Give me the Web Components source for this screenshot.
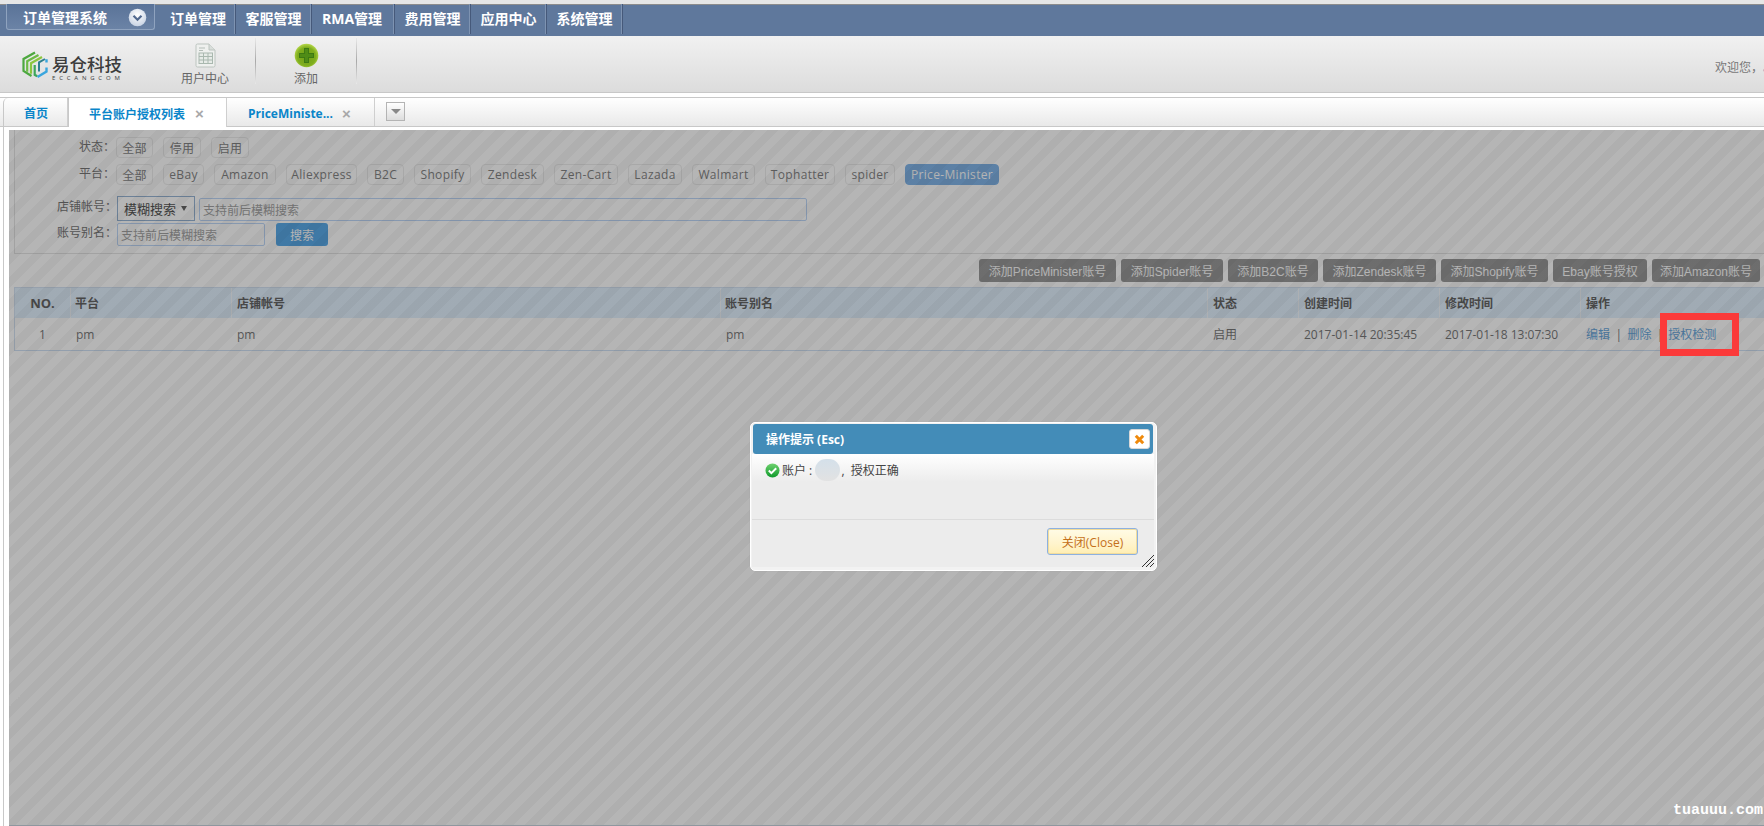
<!DOCTYPE html>
<html lang="zh"><head><meta charset="utf-8"><title>订单管理系统</title>
<style>
html,body{margin:0;padding:0;height:826px;overflow:hidden;background:#fff;}
body{font:12px "Open Sans","Noto Sans CJK SC",sans-serif;color:#777;}
x-app{display:flex;flex-direction:column;width:1764px;height:826px;overflow:hidden;}
</style></head><body>
<x-app>
  <x-topbar></x-topbar>
  <x-toolbar></x-toolbar>
  <x-tabs></x-tabs>
  <x-workspace>
    <x-search></x-search>
    <x-actions></x-actions>
    <x-grid></x-grid>
    <x-overlay slot="over"></x-overlay>
    <x-callout slot="over"></x-callout>
    <x-dialog slot="over"></x-dialog>
    <x-watermark slot="over">tuauuu.com</x-watermark>
  </x-workspace>
</x-app>
<script>
const def=(name,html)=>customElements.define(name,class extends HTMLElement{
  constructor(){super();this.attachShadow({mode:'open'}).innerHTML=html;}
});

def('x-pill',`<style>
:host{display:inline-flex;align-items:center;justify-content:center;box-sizing:border-box;height:21px;width:var(--w);
border:1px solid #ececec;border-radius:4px;color:#858585;font-size:12px;letter-spacing:.35px;white-space:nowrap;}
:host([on]){background:#81b5e9;border-color:#81b5e9;color:#fff;}
</style><slot></slot>`);

def('x-topbar',`<style>
:host{display:block;flex:none;height:36px;box-sizing:border-box;border-top:4px solid #e6e6e6;background:#5f789c;box-shadow:inset 0 1px 0 #8c8c8c;}
.wrap{display:flex;height:32px;padding-left:6px;}
.sys{box-sizing:border-box;width:149px;height:26px;margin-right:5px;display:flex;align-items:center;justify-content:space-between;padding:0 7px 0 16px;
background:linear-gradient(#5a7398,#6b83a6);border:1px solid #8fa3bf;border-top:0;border-radius:0 0 3px 3px;color:#fff;font-weight:700;font-size:14px;}
svg{display:block;margin-top:2px}
nav{display:flex;}
a{box-sizing:border-box;width:76px;height:30px;padding:0 0 2px 2px;display:flex;align-items:center;justify-content:center;color:#fff;font-weight:700;font-size:14px;border-right:1px solid #7e93b1;white-space:nowrap;box-shadow:1px 0 0 #46597a;}
a.r{width:83px;padding-left:0}
</style><div class="wrap"><div class="sys"><span>订单管理系统</span>
<svg width="19" height="19" viewBox="0 0 19 19"><defs><radialGradient id="g" cx=".5" cy=".35" r=".7"><stop offset="0" stop-color="#fff"/><stop offset="1" stop-color="#c4d0e2"/></radialGradient></defs><circle cx="9.5" cy="9.5" r="8.8" fill="url(#g)"/><path d="M5.5 7.8l4 4 4-4" fill="none" stroke="#51698f" stroke-width="2.2"/></svg></div>
<nav><a style="width:75px">订单管理</a><a>客服管理</a><a class="r">RMA管理</a><a>费用管理</a><a>应用中心</a><a>系统管理</a></nav></div>`);

def('x-toolbar',`<style>
:host{display:flex;flex:none;height:57px;box-sizing:border-box;background:linear-gradient(#f1f1f1,#dcdcdc);border-bottom:1px solid #c8c8c8;position:relative;overflow:hidden;}
.logo{width:155px;flex:none;display:flex;padding:15px 0 0 22px;box-sizing:border-box;gap:4px;}
.lt{display:flex;flex-direction:column;color:#3c3c3c;line-height:1;margin-top:3px}
.lt b{font:500 17.5px "Noto Sans CJK SC",sans-serif;line-height:20px;letter-spacing:0;white-space:nowrap;}
.lt i{font:normal 6px "Open Sans",sans-serif;letter-spacing:3.8px;white-space:nowrap;line-height:7px;margin-top:1px}
.it{box-sizing:border-box;width:100px;height:49px;margin-top:2px;display:flex;flex-direction:column;align-items:center;justify-content:flex-end;color:#666;font-size:12px;line-height:16px;flex:none}
.sep{width:1px;height:46px;margin-top:2px;background:linear-gradient(#e8e8e8,#a8a8a8 50%,#e8e8e8);flex:none}
.it svg{display:block;margin-bottom:3px}
.welcome{position:absolute;left:1715px;top:23px;white-space:nowrap;color:#777;font-size:12px;line-height:18px}
.welcome span{color:#6a78b8}
</style>
<div class="logo"><svg width="26" height="28" viewBox="0 0 26 28" fill="none">
<path d="M13 1.5L1.5 8v12l8 5" stroke="#4da83f" stroke-width="2.2"/>
<path d="M16.5 4L5.2 10.2v10.6" stroke="#6cbb45" stroke-width="2.2"/>
<path d="M20 6L9 12.2v10.5" stroke="#8cc63f" stroke-width="2.2"/>
<path d="M12.7 14v9.8l2.5 1.5" stroke="#3ea65a" stroke-width="2.2"/>
<path d="M24.5 8.3v3.2M24.5 16.5v4L15.5 26" stroke="#3aa6de" stroke-width="2.4"/>
<path d="M23 8l-6 3.4v9" stroke="#2f7f8f" stroke-width="2"/></svg>
<div class="lt"><b>易仓科技</b><i>ECCANGCOM</i></div></div>
<div class="it"><svg width="21" height="25" viewBox="0 0 21 25"><path d="M1 2.5Q1 1 2.5 1H14l6 6v15.5q0 1.500-1.500 1.500h-16Q1 24 1 22.500z" fill="#eef0ee" stroke="#bcc4bf"/><path d="M14 1v6h6" fill="#d9dedb" stroke="#bcc4bf"/><path d="M4 5h6M4 7.500h4" stroke="#b4bdb8"/><rect x="4" y="10" width="13.500" height="10.500" fill="#e6ebe7" stroke="#a9b8af"/><path d="M4 13.500h13.500M4 17h13.500M8.500 10v10.500M13 10v10.500" stroke="#a9b8af"/></svg>用户中心</div>
<div class="sep"></div>
<div class="it"><svg width="25" height="25" viewBox="0 0 25 25"><defs><radialGradient id="p" cx=".5" cy=".55" r=".55"><stop offset="0" stop-color="#6f9e16"/><stop offset=".7" stop-color="#7fae1e"/><stop offset="1" stop-color="#b7d84a"/></radialGradient></defs><circle cx="12.500" cy="12.500" r="11.800" fill="url(#p)"/><path d="M10 5h5v5h5v5h-5v5h-5v-5H5v-5h5z" fill="#3e7a12"/><path d="M11 6h3v5h5v3h-5v5h-3v-5H6v-3h5z" fill="#4f8c16"/></svg>添加</div>
<div class="sep"></div>
<div class="welcome">欢迎您，<span>admin</span></div>`);

def('x-tabs',`<style>
:host{display:flex;align-items:stretch;flex:none;box-sizing:border-box;height:30px;margin-top:4px;padding-left:3px;border-top:1px solid #c8c8c8;border-bottom:1px solid #c8c8c8;background:linear-gradient(#fff,#e9e9e9);}
.t{box-sizing:border-box;display:flex;align-items:center;padding-top:2px;color:#0a85c9;font-weight:700;font-size:12px;border-right:1px solid #cfcfcf;white-space:nowrap;position:relative;}
.first{width:65px;padding-left:20px;border-left:1px solid #c8c8c8;border-top-left-radius:5px;}
.act{width:159px;padding-left:20px;background:#fff;height:30px;margin-bottom:-1px;border-left:1px solid #c8c8c8;}
.third{width:148px;padding-left:21px;}
.x{position:absolute;top:9px;color:#a8a8a8;font:700 15px "Liberation Sans",sans-serif;line-height:13px}
.dd{box-sizing:border-box;width:19px;height:19px;margin:4px 0 0 11px;border:1px solid #b4b4b4;background:linear-gradient(#fff,#ddd);display:flex;align-items:center;justify-content:center;}
.dd i{width:0;height:0;border:5px solid transparent;border-top:5px solid #888;border-bottom:0;}
</style>
<div class="t first">首页</div>
<div class="t act">平台账户授权列表<span class="x" style="left:126px">×</span></div>
<div class="t third">PriceMiniste...<span class="x" style="left:115px">×</span></div>
<div class="dd"><i></i></div>`);

customElements.define('x-workspace',class extends HTMLElement{
  constructor(){super();this.attachShadow({mode:'open'}).innerHTML=`<style>
  :host{display:block;flex:1;min-height:0;position:relative;box-sizing:border-box;padding:3px 0 0 14px;background:#fff;overflow:hidden;}
  :host::before{content:"";position:absolute;left:3px;top:0;bottom:0;width:1px;background:#c8c8c8}
  .main{display:flex;flex-direction:column}
  </style><div class="main"><slot></slot></div><slot name="over"></slot>`;}
});

def('x-search',`<style>
:host{display:flex;flex-direction:column;box-sizing:border-box;height:124px;padding-top:7px;border-left:1px solid #e4e4e4;border-bottom:1px solid #e4e4e4;}
.r{display:flex;align-items:center;}
.l{width:101px;flex:none;text-align:right;color:#777;font-size:12px;white-space:nowrap;box-sizing:border-box;padding-right:1px;padding-bottom:3px}
.l.w{width:102px;padding-right:0;padding-bottom:5px;align-self:center}
.p{display:flex;gap:10px}
.sel{box-sizing:border-box;width:78px;height:25px;border:1px solid #98b5d5;color:#555;display:flex;align-items:center;padding-left:6px;font-size:13px;gap:5px;white-space:nowrap}
.sel i{width:0;height:0;border:3.500px solid transparent;border-top:5px solid #666;border-bottom:0}
.in{box-sizing:border-box;height:23px;border:1px solid #bdd6f7;border-radius:2px;color:#a4a4a4;font-size:12px;padding-left:3px;display:flex;align-items:center;white-space:nowrap}
.btn{box-sizing:border-box;width:52px;height:23px;background:#5aaae9;border-radius:3px;color:#fff;display:flex;align-items:center;justify-content:center;font-size:12px;margin-left:11px}
</style>
<div class="r" style="height:21px"><div class="l">状态：</div><div class="p">
<x-pill style="--w:37px">全部</x-pill><x-pill style="--w:38px">停用</x-pill><x-pill style="--w:38px">启用</x-pill></div></div>
<div class="r" style="height:21px;margin-top:6px"><div class="l">平台：</div><div class="p">
<x-pill style="--w:37px">全部</x-pill><x-pill style="--w:41px">eBay</x-pill><x-pill style="--w:62px">Amazon</x-pill><x-pill style="--w:71px">Aliexpress</x-pill><x-pill style="--w:37px">B2C</x-pill><x-pill style="--w:57px">Shopify</x-pill><x-pill style="--w:63px">Zendesk</x-pill><x-pill style="--w:64px">Zen-Cart</x-pill><x-pill style="--w:54px">Lazada</x-pill><x-pill style="--w:63px">Walmart</x-pill><x-pill style="--w:70px">Tophatter</x-pill><x-pill style="--w:50px">spider</x-pill><x-pill style="--w:94px" on>Price-Minister</x-pill></div></div>
<div class="r" style="height:25px;margin-top:11px;align-items:flex-end"><div class="l w">店铺帐号：</div><div class="p" style="gap:4px;align-items:flex-end"><div class="sel">模糊搜索<i></i></div><div class="in" style="width:608px">支持前后模糊搜索</div></div></div>
<div class="r" style="height:23px;margin-top:2px"><div class="l w">账号别名：</div><div class="in" style="width:148px">支持前后模糊搜索</div><div class="btn">搜索</div></div>`);

def('x-action',`<style>:host{display:flex;align-items:center;justify-content:center;box-sizing:border-box;height:23px;width:var(--w);background:#9a9a9a;border-radius:3px;color:#fff;font:12px "Liberation Sans","Noto Sans CJK SC",sans-serif;white-space:nowrap;}</style><slot></slot>`);

def('x-actions',`<style>:host{display:flex;justify-content:flex-end;gap:5px;padding-right:4px;margin-top:5px;height:23px;flex:none}</style>
<x-action style="--w:137px">添加PriceMinister账号</x-action><x-action style="--w:102px">添加Spider账号</x-action><x-action style="--w:90px">添加B2C账号</x-action><x-action style="--w:113px">添加Zendesk账号</x-action><x-action style="--w:107px">添加Shopify账号</x-action><x-action style="--w:94px">Ebay账号授权</x-action><x-action style="--w:108px">添加Amazon账号</x-action>`);

def('x-grid',`<style>
:host{display:block;margin-top:5px;width:1750px;}
table{border-collapse:separate;border-spacing:0;table-layout:fixed;width:1750px;font-size:12px;border-top:1px solid #d4e2f2;border-left:1px solid #d4e2f2;}
th{height:30px;padding:0 0 0 5px;text-align:left;background:#e2f1fe;color:#666;font-weight:700;border-left:1px solid #f4f8fc;box-sizing:border-box;white-space:nowrap}
th:first-child{border-left:0;padding:0;text-align:center;font-size:13px}
th:nth-child(2){padding-left:4px}
th:nth-child(4){padding-left:4px}
td{height:33px;padding:0 0 0 6px;color:#7a7a7a;border-bottom:1px solid #cfe0f4;box-sizing:border-box;white-space:nowrap}
td:first-child{padding:0;text-align:center}
a{color:#6aa8dd}
i{font-style:normal;color:#777;margin:0 5.500px}
</style><table>
<colgroup><col style="width:55px"><col style="width:161px"><col style="width:489px"><col style="width:487px"><col style="width:91px"><col style="width:141px"><col style="width:141px"><col style="width:184px"></colgroup>
<tr><th>NO.</th><th>平台</th><th>店铺帐号</th><th>账号别名</th><th>状态</th><th>创建时间</th><th>修改时间</th><th>操作</th></tr>
<tr><td>1</td><td>pm</td><td>pm</td><td>pm</td><td>启用</td><td>2017-01-14 20:35:45</td><td>2017-01-18 13:07:30</td><td><a>编辑</a><i>|</i><a>删除</a><i style="margin:0 5px">|</i><a>授权检测</a></td></tr>
</table>`);

def('x-overlay',`<style>:host{display:block;position:absolute;left:9px;right:0;top:3px;bottom:0;
background:repeating-linear-gradient(135deg,rgba(0,0,0,.29) 0,rgba(0,0,0,.29) 8px,rgba(0,0,0,.315) 8px,rgba(0,0,0,.315) 16px);border-bottom:1px solid #8e979f;box-sizing:border-box}</style>`);

def('x-callout',`<style>:host{display:block;position:absolute;left:1660px;top:186px;width:79px;height:43px;box-sizing:border-box;border:7px solid #fb3a3a;}</style>`);

def('x-watermark',`<style>:host{display:block;position:absolute;right:1px;top:676px;color:#fff;font:700 15px/16px "Liberation Mono",monospace;}</style><slot></slot>`);

def('x-dialog',`<style>
:host{display:flex;flex-direction:column;position:absolute;left:750px;top:295px;width:407px;height:149px;box-sizing:border-box;padding:1px 3px 3px 2px;background:#f2f2f2;border:1px solid #fff;border-radius:5px;color:#555;font-size:12px;box-shadow:0 0 1px #999;}
.bar{flex:none;height:30px;background:#438cb8;border-radius:3px;display:flex;align-items:center;justify-content:space-between;padding:0 3px 0 13px;color:#fff;font-weight:700;font-size:12px;}
.cl{box-sizing:border-box;width:21px;height:20px;background:#fff;border:1px solid #d8d8d8;border-radius:3px;display:flex;align-items:center;justify-content:center;}
.body{flex:none;height:66px;box-sizing:border-box;padding:5px 13px 0;background:linear-gradient(#fff,#ececec 28px);display:flex;align-items:flex-start;border-bottom:1px solid #dcdcdc;margin:0 -1px;}
.msg{display:flex;align-items:center;height:22px;white-space:pre;color:#444}
.msg svg{margin-right:2px;flex:none}
.blob{display:inline-block;width:25px;height:22px;border-radius:11px;background:linear-gradient(#d4e0ea,#e2e2e2);margin:0 1px 0 0;filter:blur(.6px);}
.foot{flex:1;background:#ececec;margin:0 -1px;display:flex;justify-content:flex-end;align-items:flex-start;padding:8px 16px 0 0;position:relative;}
.b{box-sizing:border-box;width:91px;height:27px;border:1px solid #8db1e0;border-radius:3px;padding:0;background:linear-gradient(#fffbe6,#fff4cc 60%,#ffeeb2);box-shadow:inset 0 0 0 1px #f1dc9d;color:#c4701a;display:flex;align-items:center;justify-content:center;font-size:12px;white-space:nowrap}
.rs{position:absolute;right:0;bottom:0;display:block}
</style>
<div class="bar"><span>操作提示 (Esc)</span><div class="cl"><svg width="11" height="11" viewBox="0 0 11 11"><path d="M1.800 1.800l7.400 7.400M9.200 1.800l-7.400 7.400" stroke="#ef8a0c" stroke-width="3"/></svg></div></div>
<div class="body"><div class="msg"><svg width="15" height="15" viewBox="0 0 15 15"><defs><linearGradient id="ok" x1="0" y1="0" x2="0" y2="1"><stop offset="0" stop-color="#6fd16f"/><stop offset="1" stop-color="#0f9a2b"/></linearGradient></defs><circle cx="7.500" cy="7.500" r="7" fill="url(#ok)"/><path d="M3.800 7.500l2.600 2.600 4.800-4.800" fill="none" stroke="#fff" stroke-width="2"/></svg>账户 : <span class="blob"></span>,  授权正确</div></div>
<div class="foot"><div class="b">关闭(Close)</div><svg class="rs" width="12" height="12" viewBox="0 0 12 12"><path d="M0 12L12 0M4 12L12 4M8 12l4-4" stroke="#333" stroke-width="1"/></svg></div>`);
</script>
</body></html>
